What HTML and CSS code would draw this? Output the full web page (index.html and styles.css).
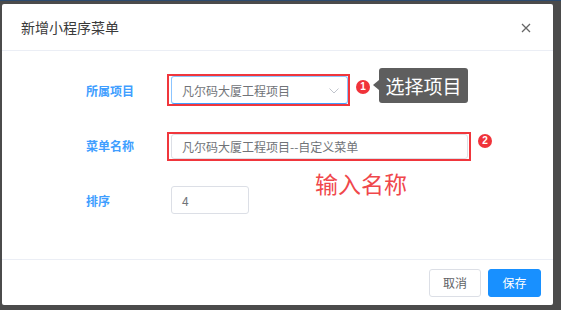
FILE: index.html
```html
<!DOCTYPE html>
<html lang="zh-CN">
<head>
    <meta charset="UTF-8">
    <title>新增小程序菜单</title>
    <link rel="stylesheet" href="styles.css">
</head>
<body>
    <div class="dialog">
        <div class="dialog-header">
            <h3 class="dialog-title">新增小程序菜单</h3>
            <span class="dialog-close">
                <svg width="10" height="10" viewBox="0 0 10 10"><path d="M1 1L9 9M9 1L1 9" stroke="#666" stroke-width="1.3" fill="none"/></svg>
            </span>
        </div>

        <div class="dialog-body">
            <div class="form-row">
                <label class="form-label">所属项目</label>
                <div class="mark mark-select">
                    <div class="input select">
                        <span>凡尔码大厦工程项目</span>
                        <svg class="arrow" width="10" height="6" viewBox="0 0 10 6"><path d="M0.5 0.5L5 5L9.5 0.5" stroke="#c0c4cc" stroke-width="1" fill="none"/></svg>
                    </div>
                </div>
            </div>
            <div class="form-row">
                <label class="form-label">菜单名称</label>
                <div class="mark mark-name">
                    <div class="input">凡尔码大厦工程项目--自定义菜单</div>
                </div>
            </div>
            <div class="form-row">
                <label class="form-label">排序</label>
                <div class="input input-sort">4</div>
            </div>
        </div>

        <div class="dialog-footer">
            <button class="btn">取消</button>
            <button class="btn btn-primary">保存</button>
        </div>

        <!-- annotations on top of the dialog -->
        <span class="badge badge-1">1</span>
        <span class="badge badge-2">2</span>
        <div class="tip">选择项目</div>
        <div class="note">输入名称</div>
    </div>
</body>
</html>
```

FILE: styles.css
```css
* {
    margin: 0;
    padding: 0;
    box-sizing: border-box;
    font-family: "Noto Sans CJK SC", "Noto Sans", sans-serif;
}
body {
    background: #4b4b4b;
    width: 561px;
    height: 310px;
    overflow: hidden;
    border-top: 1px solid #2c4a6e;
}
.dialog {
    position: relative;
    margin: 3px 0 0 2px;
    width: 551px;
    height: 301px;
    background: #fff;
    border-radius: 2px;
}
.dialog-header {
    height: 47px;
    padding: 0 22px 0 19px;
    border-bottom: 1px solid #ebeef5;
    display: flex;
    align-items: center;
    justify-content: space-between;
}
.dialog-title {
    font-size: 14px;
    font-weight: normal;
    line-height: 20px;
    color: #3a3a3a;
}
.dialog-close {
    display: flex;
    margin-top: 2px;
}
.dialog-body {
    height: 208px;
    padding: 23px 0 0 84px;
    display: flex;
    flex-direction: column;
    gap: 23px;
}
.form-row {
    height: 32px;
    display: flex;
    align-items: center;
}
.form-label {
    width: 81px;
    font-size: 12px;
    font-weight: bold;
    color: #409eff;
}
.mark {
    border: 2px solid #f0363c;
    display: flex;
    align-items: center;
    padding: 0 2px;
}
.mark-select {
    width: 183px;
    height: 32px;
    padding-right: 0;
}
.mark-name {
    width: 304px;
    height: 29px;
    margin-top: 2px;
    padding-right: 1px;
}
.input {
    flex: 1;
    height: 100%;
    border: 1px solid #dcdfe6;
    border-radius: 3px;
    padding-left: 10px;
    font-size: 12px;
    color: #707378;
    display: flex;
    align-items: center;
    background: #fff;
}
.select {
    height: 28px;
    border-color: #8cc5ff;
    border-bottom-color: #409eff;
    justify-content: space-between;
    padding-right: 8px;
}
.select .arrow {
    margin-top: 1px;
}
.input-sort {
    flex: none;
    width: 78px;
    height: 28px;
    margin-left: 4px;
}
.dialog-footer {
    height: 46px;
    border-top: 1px solid #ebeef5;
    display: flex;
    align-items: center;
    justify-content: flex-end;
    gap: 7px;
    padding-right: 12px;
}
.btn {
    width: 52px;
    height: 28px;
    border: 1px solid #dcdfe6;
    border-radius: 3px;
    background: #fff;
    font-size: 12px;
    color: #606266;
}
.btn-primary {
    width: 53px;
    background: #1890ff;
    border-color: #1890ff;
    color: #fff;
}
.badge {
    position: absolute;
    width: 14px;
    height: 14px;
    border-radius: 50%;
    background: #f0333a;
    color: #fff;
    font-size: 10px;
    font-weight: bold;
    line-height: 14px;
    text-align: center;
    font-family: "Liberation Sans", sans-serif;
}
.badge-1 {
    left: 354px;
    top: 76px;
}
.badge-2 {
    left: 476px;
    top: 130px;
}
.tip {
    position: absolute;
    left: 377px;
    top: 64px;
    width: 89px;
    height: 35px;
    background: #5e5e5e;
    border-radius: 3px;
    color: #fff;
    font-size: 19px;
    line-height: 35px;
    text-align: center;
}
.tip::before {
    content: "";
    position: absolute;
    left: -6px;
    top: 12px;
    border-style: solid;
    border-width: 5px 6px 5px 0;
    border-color: transparent #5e5e5e transparent transparent;
}
.note {
    position: absolute;
    left: 313px;
    top: 168px;
    font-size: 23px;
    line-height: 1;
    color: #f0474b;
}
```
